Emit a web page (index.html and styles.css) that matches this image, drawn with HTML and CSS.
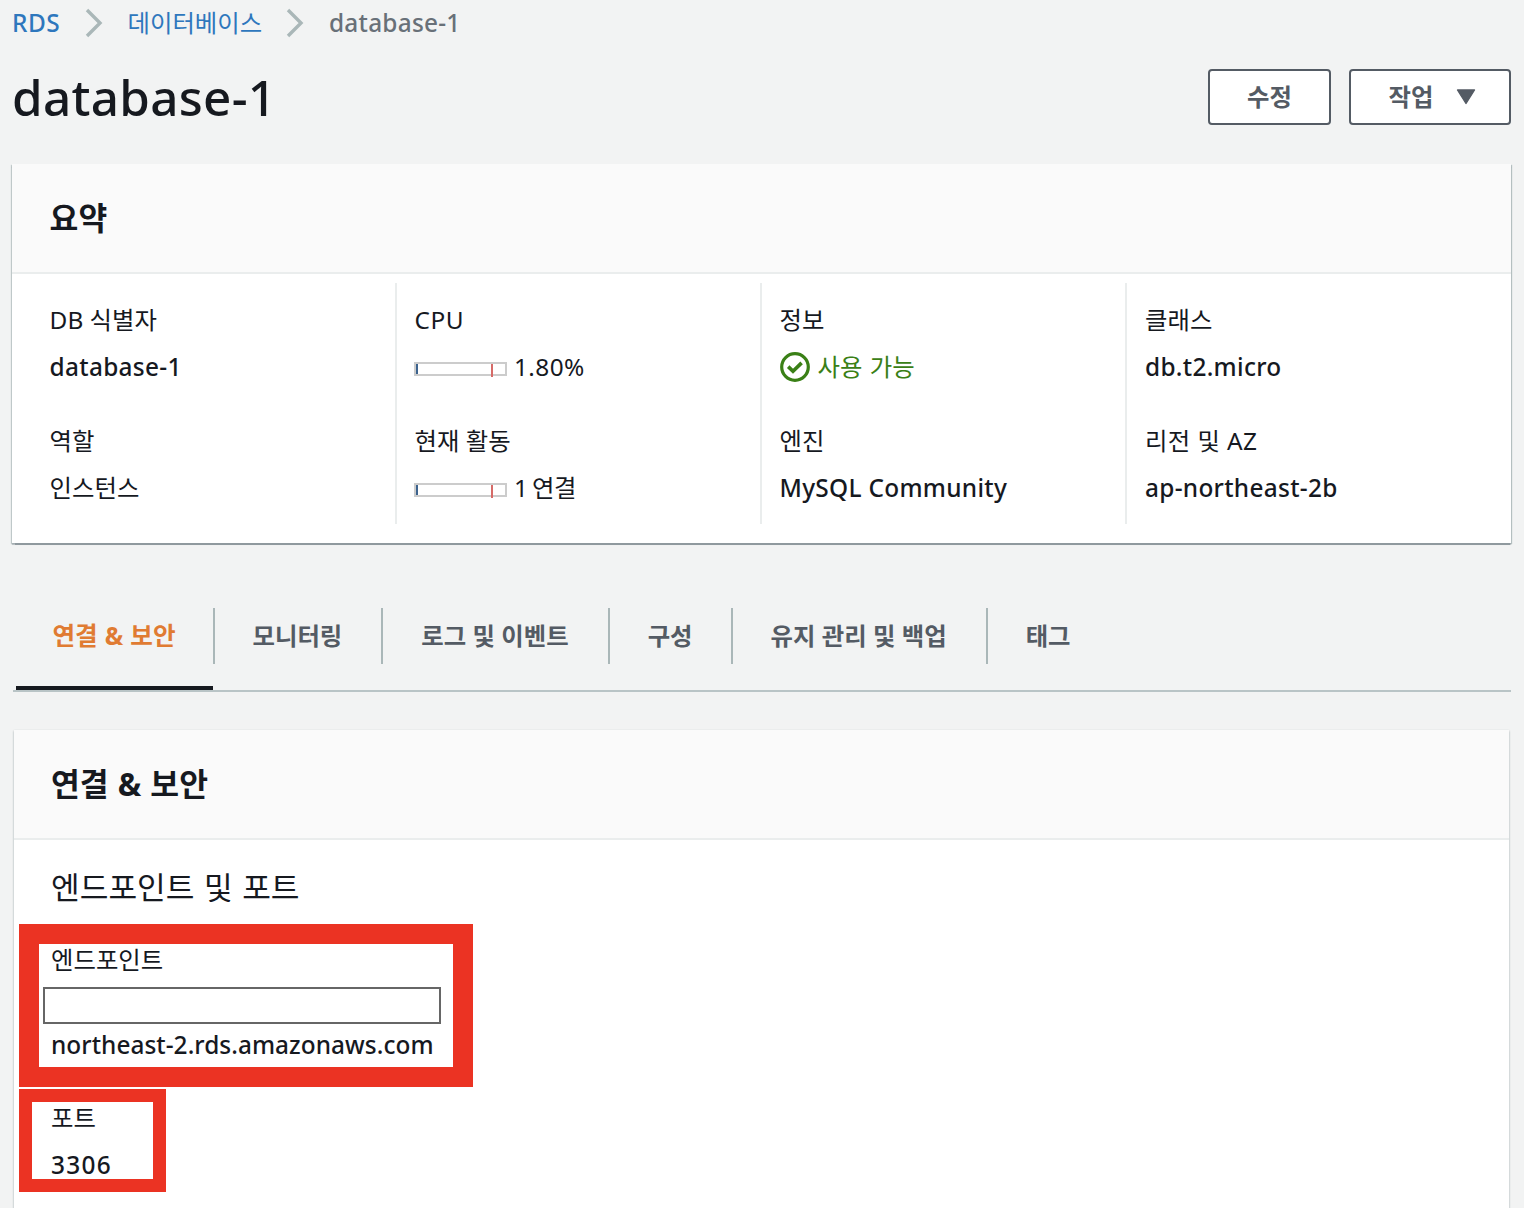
FILE: index.html
```html
<!DOCTYPE html>
<html lang="ko">
<head>
<meta charset="utf-8">
<title>database-1</title>
<link rel="stylesheet" href="styles.css">
</head>
<body>
<nav class="breadcrumb">
  <a class="crumb" href="#">RDS</a>
  <svg class="chevron" width="18" height="30" viewBox="0 0 18 30"><path d="M2 2l13 13L2 28" fill="none" stroke="#aab7b8" stroke-width="3.4"/></svg>
  <a class="crumb crumb-ko" href="#">데이터베이스</a>
  <svg class="chevron" width="18" height="30" viewBox="0 0 18 30"><path d="M2 2l13 13L2 28" fill="none" stroke="#aab7b8" stroke-width="3.4"/></svg>
  <span class="crumb current">database-1</span>
</nav>

<header class="page-header">
  <h1 class="page-title">database-1</h1>
  <div class="actions">
    <button class="button button-edit">수정</button>
    <button class="button button-menu">작업
      <svg width="20" height="16" viewBox="0 0 20 16"><path d="M1.5 1h17L10 14.5z" fill="#545b64" stroke="#545b64" stroke-width="1.4" stroke-linejoin="round"/></svg>
    </button>
  </div>
</header>

<section class="card summary">
  <div class="card-header"><h2 class="card-title">요약</h2></div>
  <div class="summary-grid">
    <dl class="column">
      <dt>DB 식별자</dt><dd class="latin">database-1</dd>
      <dt>역할</dt><dd>인스턴스</dd>
    </dl>
    <dl class="column">
      <dt class="cpu">CPU</dt><dd class="percent"><span class="meter"><i class="meter-value"></i><i class="meter-limit"></i></span>1.80%</dd>
      <dt>현재 활동</dt><dd class="sessions"><span class="meter"><i class="meter-value"></i><i class="meter-limit"></i></span>1 연결</dd>
    </dl>
    <dl class="column">
      <dt>정보</dt>
      <dd class="status"><svg width="30" height="30" viewBox="0 0 30 30" fill="none" stroke="#3a8016"><circle cx="15" cy="15" r="13.3" stroke-width="3.2"/><path d="M8.2 14.6l4.8 4.7 8.6-8.4" stroke-width="3.6"/></svg>사용 가능</dd>
      <dt>엔진</dt><dd class="latin">MySQL Community</dd>
    </dl>
    <dl class="column">
      <dt>클래스</dt><dd class="latin">db.t2.micro</dd>
      <dt class="zone">리전 및 AZ</dt><dd class="latin">ap-northeast-2b</dd>
    </dl>
  </div>
</section>

<nav class="tabs">
  <a class="tab active" href="#">연결 &amp; 보안</a>
  <a class="tab" href="#">모니터링</a>
  <a class="tab" href="#">로그 및 이벤트</a>
  <a class="tab tab-short" href="#">구성</a>
  <a class="tab" href="#">유지 관리 및 백업</a>
  <a class="tab" href="#">태그</a>
</nav>

<section class="card details">
  <div class="card-header"><h2 class="card-title">연결 &amp; 보안</h2></div>
  <h3 class="section-title">엔드포인트 및 포트</h3>
  <div class="highlight endpoint">
    <div class="label">엔드포인트</div>
    <div class="mask"></div>
    <div class="value latin">northeast-2.rds.amazonaws.com</div>
  </div>
  <div class="highlight port">
    <div class="label">포트</div>
    <div class="value latin">3306</div>
  </div>
</section>
</body>
</html>
```
FILE: styles.css
```css
* { box-sizing: border-box; }
html { overflow: hidden; }
body {
  margin: 0;
  height: 1208px;
  overflow: hidden;
  background: #f2f3f3;
  color: #16191f;
  font: 400 24.4px/46px "Noto Sans", "Noto Sans CJK KR", sans-serif;
  white-space: nowrap;
}
h1, h2, h3, dl, dd { margin: 0; }
a { text-decoration: none; }
svg { display: block; flex: none; }

.breadcrumb { display: flex; align-items: center; height: 46px; padding-left: 12px; }
.crumb { width: 49px; color: #2e77bd; font-weight: 500; letter-spacing: .5px; }
.crumb-ko { width: 135px; font-weight: 400; letter-spacing: 0; }
.crumb.current { color: #687078; letter-spacing: .25px; }
.chevron { margin: 0 25px 0 23.5px; }

.page-header { display: flex; justify-content: space-between; height: 118px; padding: 23px 13px 0 12px; }
.page-title { margin-top: -1px; font-size: 49.4px; font-weight: 500; line-height: 57px; letter-spacing: .3px; }
.actions { display: flex; gap: 18px; }
.button {
  display: flex; align-items: center; justify-content: center;
  height: 56px; padding: 0;
  border: 2px solid #545b64; border-radius: 4px;
  background: #fff; color: #545b64;
  font: 700 24.4px/50px "Noto Sans", "Noto Sans CJK KR", sans-serif;
}
.button-edit { width: 123px; }
.button-menu { width: 162px; padding-left: 5px; gap: 23px; }

.card { background: #fff; }
.card-header { background: #fafafa; border-bottom: 2px solid #eaeded; padding-left: 37px; }
.card-title { font-size: 31.3px; font-weight: 700; line-height: 108px; word-spacing: 1px; }
.summary {
  height: 379px; margin: 0 13px 0 12px;
  box-shadow: 0 1.5px 1px #8f999e, 1px 1px 1px #b8c2c4, -1px 1px 1px #c4cccd;
}
.summary .card-header { padding-left: 37.6px; }
.summary-grid { display: grid; grid-template-columns: 384.5px 365px 365.5px 1fr; padding-top: 9px; }
.column { height: 241px; padding: 14px 0 0 18px; border-right: 2px solid #eaeded; }
.column:first-child { padding-left: 37.6px; }
.column:last-child { border: 0; }
dt { height: 46px; }
dd { display: flex; align-items: center; height: 47px; margin-bottom: 28px; }
.latin { font-weight: 500; letter-spacing: .3px; }
.cpu { letter-spacing: .5px; }
.percent { letter-spacing: .4px; }
.sessions { word-spacing: -1.5px; letter-spacing: -.4px; }
.zone { letter-spacing: .4px; }
.meter { position: relative; width: 93px; height: 14px; margin: 5px 7px 0 -.5px; border: 2px solid #ccc; }
.meter-value { position: absolute; left: 0; top: 0; width: 2px; height: 10px; background: #3c638e; }
.meter-limit { position: absolute; left: 75px; top: 0; width: 2px; height: 13px; background: #d66b68; }
.status { gap: 8px; color: #3a8016; word-spacing: 1px; }

.tabs { display: flex; height: 84px; margin: 65px 13px 0; border-bottom: 2px solid #b9c4c6; }
.tab { height: 56px; padding: 0 39px 0 38px; border-right: 2px solid #aab7b8; color: #545b64; font-weight: 700; line-height: 56px; }
.tab-short { padding-right: 38px; }
.tab:last-child { border: 0; }
.tab.active { position: relative; padding: 0 37px 0 39.4px; color: #e07b32; font-size: 24.6px; word-spacing: .7px; }
.tab.active::after { content: ""; position: absolute; left: 3px; right: 0; top: 78px; height: 4px; background: #16191f; }

.details { height: 500px; margin: 38px 15px 0 14px; box-shadow: 0 1px 2px #9aa5a9; }
.section-title { height: 84px; padding-left: 37px; font-size: 31.2px; font-weight: 400; line-height: 94px; word-spacing: 1.4px; }
.highlight { margin-left: 5px; border: 20px solid #eb3323; line-height: 32px; }
.endpoint { width: 454px; height: 163px; padding-left: 4px; }
.endpoint .value { letter-spacing: .05px; }
.label, .value { padding-left: 8px; }
.mask { width: 398px; height: 37px; margin: 11px 0 5px; border: 2px solid #666; }
.port { width: 147px; height: 103px; margin-top: 2px; padding-left: 11px; border-width: 13px; }
.port .value { margin-top: 15px; letter-spacing: 1.3px; }
```
